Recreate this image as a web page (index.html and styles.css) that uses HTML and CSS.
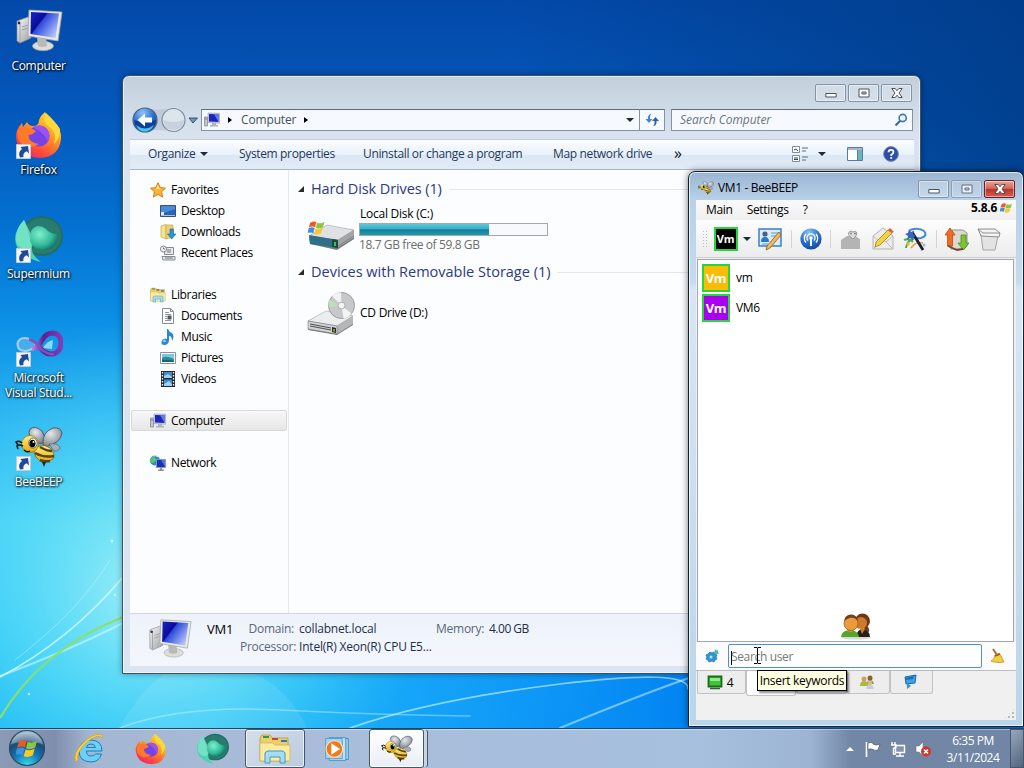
FILE: index.html
```html
<!DOCTYPE html>
<html lang="en">
<head>
    <meta charset="UTF-8">
    <meta name="viewport" content="width=device-width, initial-scale=1.0">
    <title>Desktop</title>
    <link rel="stylesheet" href="styles.css">
</head>
<body>
    <!-- Shared icons -->
    <svg class="sprite" width="0" height="0" aria-hidden="true">
        <defs>
            <linearGradient id="screen" x1="0" y1="0" x2="1" y2=".7">
                <stop offset="0" stop-color="#1226c8"/><stop offset=".4" stop-color="#0a0c98"/>
                <stop offset=".44" stop-color="#2c48dc"/><stop offset="1" stop-color="#b4c4fa"/>
            </linearGradient>
            <linearGradient id="metal" x1="0" y1="0" x2="1" y2="1">
                <stop offset="0" stop-color="#fafafa"/><stop offset="1" stop-color="#9a9da0"/>
            </linearGradient>
            <linearGradient id="fox" x1=".8" y1="0" x2=".2" y2="1">
                <stop offset="0" stop-color="#ffe438"/><stop offset=".4" stop-color="#ff9a22"/>
                <stop offset=".75" stop-color="#ff4a3c"/><stop offset="1" stop-color="#e3207a"/>
            </linearGradient>
            <radialGradient id="teal" cx=".35" cy=".35" r=".8">
                <stop offset="0" stop-color="#7df0cf"/><stop offset=".6" stop-color="#2fb796"/><stop offset="1" stop-color="#0c5a4e"/>
            </radialGradient>
            <linearGradient id="gold" x1="0" y1="0" x2="0" y2="1">
                <stop offset="0" stop-color="#fff08a"/><stop offset="1" stop-color="#e3a800"/>
            </linearGradient>
            <radialGradient id="wing" cx=".4" cy=".3" r=".8">
                <stop offset="0" stop-color="#e6e9ee"/><stop offset="1" stop-color="#6f7580"/>
            </radialGradient>
            <radialGradient id="blueball" cx=".4" cy=".2" r=".9">
                <stop offset="0" stop-color="#8fc4f6"/><stop offset=".5" stop-color="#2b74cf"/><stop offset="1" stop-color="#0d3f94"/>
            </radialGradient>
            <radialGradient id="orb" cx=".5" cy="1" r="1">
                <stop offset="0" stop-color="#35e0f2"/><stop offset=".4" stop-color="#1479b2"/>
                <stop offset=".7" stop-color="#1b4a76"/><stop offset="1" stop-color="#a9c2d4"/>
            </radialGradient>
            <linearGradient id="infinity" x1="0" y1="0" x2="1" y2="0">
                <stop offset="0" stop-color="#b48be0"/><stop offset=".4" stop-color="#5c1f92"/><stop offset="1" stop-color="#7d3fb8"/>
            </linearGradient>

            <symbol id="i-winflag" viewBox="0 0 24 22">
                <path d="M3 4q4-3 8-1L9.500 10Q6 8 1 10z" fill="#ec5a24"/>
                <path d="M12 4q5 2 10-1l-2 7q-5 3-9.500 1z" fill="#8cc63a"/>
                <path d="M1 11q4-2 8 0l-2 7q-4-2-8 0z" fill="#3d8fe0"/>
                <path d="M10 12q5 2 9.500-1l-2 7q-5 3-9.500 1z" fill="#fdc729"/>
            </symbol>
            <symbol id="i-computer" viewBox="0 0 48 48">
                <path d="M2 14l11-4 3 4v17L5 36l-3-2z" fill="url(#metal)" stroke="#8d9093" stroke-width=".7"/>
                <path d="M5 16v19M7 20l6-2M7 23l6-2" stroke="#9da0a3" fill="none"/>
                <circle cx="4" cy="16" r="1.400" fill="#333"/>
                <ellipse cx="28" cy="39" rx="10.500" ry="4.700" fill="#dcdcd8" stroke="#a9aaa8" stroke-width=".7"/>
                <path d="M22 30h9l1 9q-5 2-9 0z" fill="#b8bab8"/>
                <path d="M14 3l33 2-4 29-30-5z" fill="#e9e9e6" stroke="#a4a7a8" stroke-width=".8"/>
                <path d="M16 5l28 1.500-3.500 24.500-25-4z" fill="url(#screen)"/>
            </symbol>
            <symbol id="i-computer-sm" viewBox="0 0 16 16">
                <path d="M.5 5h3v9h-3z" fill="#c3c6cc" stroke="#7b808a" stroke-width=".7"/>
                <path d="M1.200 7h1.600" stroke="#555" stroke-width=".8"/>
                <path d="M4 1l11.500.3v10L4 10.500z" fill="#cfd3e2" stroke="#9297ab" stroke-width=".6"/>
                <path d="M5 2l9.500.3v7.600L5 9.500z" fill="#1c24bd"/><path d="M10 2l4.500.3v7.600z" fill="#5b7bee"/>
                <path d="M8 11h4v2h2v1.500H6V13h2z" fill="#aeb3bd"/>
            </symbol>
            <symbol id="i-firefox" viewBox="0 0 48 48">
                <path d="M30 1q3 6 9 10 8 8 7 17-2 18-21 19Q3 46 1 26q0-8 6-14l1 4 4-5q2 4 6 4 6 0 6-6 2-5 6-8z" fill="url(#fox)"/>
                <path d="M31 2q-5 9 5 15 6 6 3 16 7-7 6-15-5-8-14-16z" fill="#ffd93a"/>
                <circle cx="24" cy="25" r="10.500" fill="#7542e5"/>
                <path d="M24 14.500a10.500 10.500 0 0 1 9 16q-5-10-15-14 3-2 6-2z" fill="#9b52f0"/>
                <path d="M3 20q8-7 18 0-3 4-8 4 1 8 11 9-9 6-16 1Q1 29 3 20z" fill="#ff7a28"/>
            </symbol>
            <symbol id="i-supermium" viewBox="0 0 48 48">
                <ellipse cx="27" cy="21" rx="21" ry="20" fill="#216e62"/>
                <ellipse cx="27" cy="21" rx="19" ry="18" fill="#277c6f"/>
                <path d="M9 5Q-5 20 3 34q9 10 23 13-10-7-9-14-3-16-8-28z" fill="#4fd2b0"/>
                <path d="M9 5q7 14 11 22l-6 8q-14-2-13-13Q2 12 9 5z" fill="#82e8cd" opacity=".7"/>
                <path d="M16 16q6-9 15-2 4 5 11 5 2 14-12 16-12 0-15-9z" fill="url(#teal)"/>
            </symbol>
            <symbol id="i-vs" viewBox="0 0 48 48">
                <path d="M2.500 25q1-6 7.500-6 6 0 11 7-5 6-11 6-7 0-7.500-7z" fill="#bfe2f8" fill-opacity=".3" stroke="#a6cdf0" stroke-width="2.200"/>
                <path d="M17 30q7-2 10-9 4-7 11-7 8 1 8 10t-8 11q-7 1-14-7" fill="none" stroke="url(#infinity)" stroke-width="5"/>
                <path d="M14 20q7 3 12 10 7 6 13 5" fill="none" stroke="#8350c0" stroke-width="2.500"/>
                <path d="M28 29q4-7 10-8l-1 9z" fill="#8ed8f4"/>
            </symbol>
            <symbol id="i-bee" viewBox="0 0 48 48">
                <path d="M23 20Q11 13 15 6q5-4 12 2 4 6 3 13z" fill="url(#wing)" stroke="#555b66"/>
                <path d="M28 21Q27 9 38 5q8-1 9 5-1 10-17 14z" fill="url(#wing)" stroke="#555b66"/>
                <path d="M34 21q9-1 11 3 0 4-6 4z" fill="#a9aeb8" stroke="#5d626d" stroke-width=".7"/>
                <path d="M19 27q7-8 16-2 6 6 3 11-5 4-11 3-8-4-8-12z" fill="url(#gold)" stroke="#8c6500" stroke-width=".8"/>
                <path d="M25 24q7 4 12 4M20 30q9 5 19 3M25 37q5 2 10 1" fill="none" stroke="#5a420e" stroke-width="2.500"/>
                <path d="M27 39l2 5 2-5z" fill="#222"/>
                <ellipse cx="15" cy="21" rx="8.500" ry="8.500" fill="url(#gold)" stroke="#9a7400" stroke-width=".7"/>
                <ellipse cx="18" cy="20" rx="4.200" ry="5" fill="#fff" stroke="#333" stroke-width=".7"/>
                <ellipse cx="17.500" cy="20.500" rx="3" ry="3.800" fill="#000"/><circle cx="18.500" cy="19" r="1" fill="#fff"/>
                <path d="M7 20q-3-3-6-1l2 3M8 23q-4-2-6 0l1 3M9 27q3 3 6 1" fill="none" stroke="#111" stroke-width="1.500"/>
            </symbol>
            <symbol id="i-link" viewBox="0 0 15 15">
                <path d="M.5.5h14v14H.5z" fill="#f4f6f8" stroke="#c3cad0"/>
                <path d="M4 13.500Q1.500 8 6 5L4.500 3l7.500-1 1 7.500-2.300-2.300Q6.500 9 7.500 13z" fill="#1d4b9a"/>
            </symbol>
            <symbol id="i-ie" viewBox="0 0 32 32">
                <path d="M29 18H13.500q0 5 4.500 5 3.500 0 4.500-2h6Q26 29 18 29 6 28.500 6 18 7 7.500 18 7q11 .5 11 11zM13.500 14.500h9Q22 11 18 11t-4.500 3.500z" fill="#6fd0f5" stroke="#1b7ec0"/>
                <path d="M3 29Q-1 20 11 9 22-1 29 2q1 1 0 3-1-2-4-2-6 1-13 8Q3 20 5 27z" fill="#ffd43a" stroke="#d79b0a" stroke-width=".6"/>
            </symbol>
            <symbol id="i-libraries" viewBox="0 0 32 32">
                <path d="M1 5l2-3h8l2 3h16v23H1z" fill="#eccf6c" stroke="#b5973a" stroke-width=".8"/>
                <path d="M4 4h6M13 6h6M22 8h6" stroke="#2c9a3d" stroke-width="2"/><path d="M13 6h5" stroke="#d5452b" stroke-width="2"/><path d="M22 8h5" stroke="#2e73c8" stroke-width="2"/>
                <path d="M1 10h13l2 2h15v16H1z" fill="#fbeb9e" stroke="#d2b558" stroke-width=".8"/>
                <path d="M6 30V20q1-2 3-2h14q2 0 3 2v10h-5v-6H11v6z" fill="#a6dcf4" stroke="#3f99cc"/>
            </symbol>
            <symbol id="i-wmp" viewBox="0 0 32 32">
                <path d="M11 4h18v24H11z" fill="#9ad0ee" stroke="#3e8fc0"/>
                <path d="M7 3h19v26H7z" fill="#bfe2f5" stroke="#3e8fc0"/>
                <path d="M3 4h19v23H3z" fill="#a5d4f0" stroke="#4a9acb"/>
                <circle cx="13" cy="16" r="9.500" fill="#f07a1c" stroke="#fde1c0" stroke-width="1.200"/>
                <path d="M9.500 9.500l10 6.500-10 6.500z" fill="#fff"/>
            </symbol>
            <symbol id="i-min" viewBox="0 0 12 12"><path d="M.8 6.500h10.400v3.500H.8z" fill="#fff" stroke="#4b5561"/></symbol>
            <symbol id="i-max" viewBox="0 0 12 12"><path d="M1 2h10v8H1z" fill="#fff" stroke="#4b5561"/><path d="M4 5h4v2H4z" fill="#cfd8e2" stroke="#4b5561"/></symbol>
            <symbol id="i-close" viewBox="0 0 12 12"><path d="M.8 1.500h3.400L6 3.700l1.800-2.200h3.400L8 6l3.200 4.500H7.800L6 8.300l-1.800 2.200H.8L4 6z" fill="#fff" stroke="#4f505a"/></symbol>
        </defs>
    </svg>

    <div class="desktop">
        <svg class="wallpaper" viewBox="0 0 1024 768" aria-hidden="true">
            <defs>
                <linearGradient id="sky" x1="0" y1="0" x2="0" y2="1">
                    <stop offset="0" stop-color="#0349a9"/><stop offset=".15" stop-color="#0458bb"/>
                    <stop offset=".3" stop-color="#0472d2"/><stop offset=".42" stop-color="#0c90e6"/>
                    <stop offset=".55" stop-color="#27b4f0"/><stop offset=".68" stop-color="#3cccf4"/>
                    <stop offset=".85" stop-color="#25c3f5"/><stop offset="1" stop-color="#12b4f4"/>
                </linearGradient>
                <radialGradient id="glow" gradientUnits="userSpaceOnUse" cx="150" cy="590" r="270">
                    <stop offset="0" stop-color="#b6f7f8" stop-opacity=".85"/><stop offset=".5" stop-color="#6fe6fa" stop-opacity=".5"/>
                    <stop offset="1" stop-color="#4fd0fa" stop-opacity="0"/>
                </radialGradient>
                <linearGradient id="right" x1="0" y1="0" x2="1" y2="0">
                    <stop offset=".22" stop-color="#18a0fb" stop-opacity="0"/><stop offset=".42" stop-color="#129cfa" stop-opacity=".8"/><stop offset=".67" stop-color="#0284f2"/>
                </linearGradient>
                <linearGradient id="topright" x1="0" y1="0" x2="1" y2="0">
                    <stop offset=".5" stop-color="#003a85" stop-opacity="0"/><stop offset="1" stop-color="#003a85" stop-opacity=".8"/>
                </linearGradient>
            </defs>
            <rect width="1024" height="768" fill="url(#sky)"/>
            <rect width="1024" height="400" fill="url(#topright)"/>
            <rect y="500" width="1024" height="268" fill="url(#right)"/>
            <rect width="1024" height="768" fill="url(#glow)"/>
            <path d="M118 730Q140 690 165 674H255Q290 690 308 730z" fill="#fff" opacity=".09"/>
            <g fill="none" stroke="#d9fbff" stroke-linecap="round">
                <path d="M0 677Q70 640 123 577" stroke-width="1.600" opacity=".8"/>
                <path d="M0 676Q70 650 123 623" stroke-width="2" opacity=".55"/>
                <path d="M15 660Q80 610 110 560" opacity=".4"/>
                <path d="M120 728Q180 705 280 710T470 716" stroke-width="1.500" opacity=".4"/>
                <path d="M350 728Q430 700 560 684T688 689" stroke-width="1.600" opacity=".6"/>
                <path d="M560 728Q640 695 689 678" stroke-width="2" opacity=".5"/>
            </g>
            <path d="M0 718Q40 650 123 617" fill="none" stroke="#8be06a" stroke-width="2"/>
            <g fill="#e9ffff" opacity=".7">
                <circle cx="112" cy="541" r="1.500"/><circle cx="115" cy="595" r="1.200"/><circle cx="29" cy="694" r="1.200"/>
            </g>
        </svg>

        <div class="shortcuts">
            <div class="shortcut">
                <svg class="shortcut-icon"><use href="#i-computer"/></svg>
                <span>Computer</span>
            </div>
            <div class="shortcut">
                <svg class="shortcut-icon"><use href="#i-firefox"/></svg>
                <svg class="link"><use href="#i-link"/></svg>
                <span>Firefox</span>
            </div>
            <div class="shortcut">
                <svg class="shortcut-icon"><use href="#i-supermium"/></svg>
                <svg class="link"><use href="#i-link"/></svg>
                <span>Supermium</span>
            </div>
            <div class="shortcut">
                <svg class="shortcut-icon"><use href="#i-vs"/></svg>
                <svg class="link"><use href="#i-link"/></svg>
                <span>Microsoft<br>Visual Stud...</span>
            </div>
            <div class="shortcut">
                <svg class="shortcut-icon"><use href="#i-bee"/></svg>
                <svg class="link"><use href="#i-link"/></svg>
                <span>BeeBEEP</span>
            </div>
        </div>

        <!-- Explorer -->
        <div class="window explorer">
            <div class="caption">
                <div class="caption-btn"><svg><use href="#i-min"/></svg></div>
                <div class="caption-btn"><svg><use href="#i-max"/></svg></div>
                <div class="caption-btn"><svg><use href="#i-close"/></svg></div>
            </div>
            <div class="navbar">
                <svg class="navbuttons" viewBox="0 0 68 28">
                    <path d="M13 2Q27 5 41 2v24q-14-4-28 0z" fill="#b8c5d1" opacity=".7"/>
                    <circle cx="13" cy="14" r="12" fill="url(#blueball)" stroke="#4b6583" stroke-width="1.200"/>
                    <path d="M2 14q11 4 22 0-1 11-11 11T2 14z" fill="#0f4099"/>
                    <path d="M4 19q9 7 18 0-3 6-9 6.500T4 19z" fill="#42c8f5"/>
                    <path d="M5.500 14l7.500-6.500v4h7v5h-7v4z" fill="#fff"/>
                    <circle cx="41.500" cy="14" r="11.500" fill="#dce4ec" stroke="#7f8e9d" stroke-width="1.200"/>
                    <path d="M31 14q10 4 21 0-1 10-10.500 10T31 14z" fill="#c8d2dc"/>
                    <path d="M57 12h8.500L61 17z" fill="#7794b4" stroke="#32475f" stroke-width=".9"/>
                </svg>
                <div class="address">
                    <svg class="icon16"><use href="#i-computer-sm"/></svg>
                    <i class="tri-right"></i>
                    <span>Computer</span>
                    <i class="tri-right"></i>
                    <i class="tri-down"></i>
                </div>
                <div class="refresh">
                    <svg class="icon16" viewBox="0 0 16 16"><path d="M7.500 2Q4 2 4 6v1H1.500L5 11l3.500-4H6V5q0-2 1.500-3z" fill="#3f86d6"/><path d="M9 14q3.500 0 3.500-4V9H15l-3.500-4L8 9h2.500v2q0 2-1.500 3z" fill="#2d62a8"/></svg>
                </div>
                <div class="searchbox">
                    <span>Search Computer</span>
                    <svg class="icon14" viewBox="0 0 14 14"><path d="M6.500 7.500L1.500 12.500" stroke="#3e6a9e" stroke-width="2.200"/><circle cx="8.700" cy="5" r="3.600" fill="#eaf4fc" stroke="#4275ad" stroke-width="1.600"/></svg>
                </div>
            </div>
            <div class="client">
                <div class="commands">
                    <span class="organize">Organize <i class="tri-down"></i></span>
                    <span>System properties</span>
                    <span>Uninstall or change a program</span>
                    <span>Map network drive</span>
                    <span class="more">»</span>
                    <svg class="icon16" viewBox="0 0 16 16"><path d="M.5.5h7v6h-7zM.5 9.500h7v6h-7z" fill="#fff" stroke="#7c8ba0"/><path d="M2 4l2-1 2 2M2 12h4M2 13.500h4" stroke="#345" fill="none"/><path d="M10 2h6M10 5h4M10 11h6M10 14h4" stroke="#5c6b80"/></svg>
                    <i class="tri-down"></i>
                    <svg class="icon16" viewBox="0 0 16 16"><path d="M.5 1.500h15v13H.5z" fill="#fff" stroke="#5f7894"/><path d="M1 2h14v2H1z" fill="#9fb9d0"/><path d="M11 4h4v10h-4z" fill="#67b3c6"/><path d="M10.500 4v10" stroke="#5f7894"/></svg>
                    <svg class="icon16" viewBox="0 0 16 16"><circle cx="8" cy="8" r="7.400" fill="#2c4ea6" stroke="#7b8dae"/><path d="M5.500 6.300Q5.500 3.800 8 3.800t2.500 2.300Q10.500 7.500 8.300 8.700V10" fill="none" stroke="#fff" stroke-width="1.800"/><circle cx="8.200" cy="12" r="1.100" fill="#fff"/></svg>
                </div>
                <div class="body">
                    <div class="tree">
                        <div class="node"><svg class="icon16" viewBox="0 0 16 16"><path d="M8 .7l2.200 4.900 5.300.6-4 3.500 1.200 5.400L8 12.400l-4.700 2.700 1.200-5.400-4-3.500 5.300-.6z" fill="#fdb43a" stroke="#d67c12"/><path d="M8 3l1.500 4H6z" fill="#ffe9a8"/></svg>Favorites</div>
                        <div class="node sub"><svg class="icon16" viewBox="0 0 16 16"><path d="M.5 2.500h15v11H.5z" fill="#2a62bd" stroke="#35507a"/><path d="M1 3h14v3L1 11z" fill="#4a8ad8"/><path d="M1 12h14v1H1z" fill="#a9c0dc"/><path d="M1 9h3v3H1z" fill="#dde8f4"/></svg>Desktop</div>
                        <div class="node sub"><svg class="icon16" viewBox="0 0 16 16"><path d="M1 2l5-1.500V15L1 13z" fill="#f7e48e" stroke="#c5a84a" stroke-width=".7"/><path d="M6 1h7v12l-7 2z" fill="#ecd173" stroke="#c5a84a" stroke-width=".7"/><path d="M10 5h3.500v5H16l-4.300 5L7.500 10H10z" fill="#2d92dc" stroke="#1a68ab" stroke-width=".6"/></svg>Downloads</div>
                        <div class="node sub"><svg class="icon16" viewBox="0 0 16 16"><path d="M4.500 2.500h9v7h-9zM2 11.500h13v3.500H3z" fill="#e8eaec" stroke="#858b92"/><circle cx="3.500" cy="4" r="3" fill="#f5f6f7" stroke="#7d848c"/><path d="M3.500 2.500V4H5M7 5h4M7 7h4M5 13h8" fill="none" stroke="#6e757d"/></svg>Recent Places</div>
                        <div class="node gap"><svg class="icon16"><use href="#i-libraries"/></svg>Libraries</div>
                        <div class="node sub"><svg class="icon16" viewBox="0 0 16 16"><path d="M2.500.5h8l3 3v12h-11z" fill="#fff" stroke="#838a92"/><path d="M10.500.5v3h3" fill="none" stroke="#838a92"/><path d="M5 4.500h4M5 6.500h6M5 8.500h2M5 10.500h2M5 12.500h6" stroke="#8e959c"/><path d="M7.500 7.500h4v4h-4z" fill="#4d5964"/></svg>Documents</div>
                        <div class="node sub"><svg class="icon16" viewBox="0 0 16 16"><path d="M8 0q1 3 4 4 3 3 0 8 0-5-3-5v5q-1 4-4.500 4T1.500 13 5 9.500q1 0 2 .5V0z" fill="#2e87d0"/><circle cx="4.500" cy="12" r="1.300" fill="#a0d4f5"/></svg>Music</div>
                        <div class="node sub"><svg class="icon16" viewBox="0 0 16 16"><path d="M.5 2.500h15v11H.5z" fill="#fff" stroke="#8391a0"/><path d="M2 4h12v8H2z" fill="#7cc4e8"/><path d="M2 8q4-3 12 1v3H2z" fill="#2f8f83"/><path d="M2 10q6-1 12 1v1H2z" fill="#1c5f86"/></svg>Pictures</div>
                        <div class="node sub"><svg class="icon16" viewBox="0 0 16 16"><path d="M1 0h14v16H1z" fill="#23282e"/><path d="M4 1h8v6H4zM4 8.500h8V15H4z" fill="#3f8ed0"/><path d="M4 5l4-2 4 3v1H4zM4 13l5-3 3 3v2H4z" fill="#9bd0f0"/><path d="M2.500 1v15M13.500 1v15" stroke="#fff" stroke-width="1.300" stroke-dasharray="1.500 1.500"/></svg>Videos</div>
                        <div class="node gap selected"><svg class="icon16"><use href="#i-computer-sm"/></svg>Computer</div>
                        <div class="node gap"><svg class="icon16" viewBox="0 0 16 16"><circle cx="5" cy="5.500" r="5" fill="#2a8cc4"/><path d="M2 2q3 0 4 2T3 8Q0 8 0 5z" fill="#5ec46a"/><path d="M3 1q3-1 5 1" stroke="#d4f0fb" fill="none"/><path d="M6.500 4.500h9v8h-9z" fill="#1931b8" stroke="#8c95b4"/><path d="M11 5h4v7z" fill="#4f74e4"/><path d="M10 13h2v1.500h2V16H8v-1.500h2z" fill="#8790a4"/></svg>Network</div>
                    </div>
                    <div class="files">
                        <div class="group"><i class="expander"></i><span class="g1">Hard Disk Drives (1)</span></div>
                        <div class="drive disk">
                            <svg class="driveicon" viewBox="0 0 48 32">
                                <path d="M2 17L20 7l27 4v9L30 31 3 25z" fill="#75797c"/>
                                <path d="M2 17L20 6l27 5-16 10z" fill="#dfe1e2" stroke="#a1a4a7" stroke-width=".6"/>
                                <path d="M31 21l16-10v8L31 29z" fill="#a3a6a8"/><path d="M31 27l16-10M31 29l16-10" stroke="#6c7073" stroke-width=".7"/>
                                <path d="M2 16l29 5v8L3 25z" fill="#2f6f88"/><path d="M25 20l6 1v8l-6-1z" fill="#1c4a34"/><path d="M28 23v4" stroke="#4ee065" stroke-width="1.500"/>
                                <svg x="1" y="0" width="18" height="18"><use href="#i-winflag"/></svg>
                            </svg>
                            <div class="driveinfo">
                                <div>Local Disk (C:)</div>
                                <div class="meter"><div class="meter-fill" style="width: 69%"></div></div>
                                <div class="free">18.7 GB free of 59.8 GB</div>
                            </div>
                        </div>
                        <div class="group"><i class="expander"></i><span class="g2">Devices with Removable Storage (1)</span></div>
                        <div class="drive">
                            <svg class="driveicon cd" viewBox="0 0 48 44">
                                <path d="M1 29l18-9 27 4v9L30 43 1 38z" fill="#77797b"/>
                                <path d="M1 29l18-10 27 5-16 10z" fill="#ecedee" stroke="#a4a6a8" stroke-width=".6"/>
                                <path d="M30 34l16-10v8L30 42z" fill="#b4b6b8"/><path d="M1 29l29 5v8L1 37z" fill="#d2d3d5" stroke="#77797c" stroke-width=".6"/>
                                <path d="M3 32l21 4M3 34l21 4" stroke="#4c4e51"/><path d="M25 35l4 1v5l-4-1z" fill="#2a2d2e"/><path d="M27 37v2.500" stroke="#a0e23c" stroke-width="1.300"/>
                                <circle cx="34.500" cy="13.500" r="13" fill="#c6c8ca" stroke="#9a9c9e"/>
                                <path d="M34.500 13.500L25 4q4-4 9-3.500zM34.500 13.500l10 8q-4 5-8 5z" fill="#f3f3f3"/>
                                <path d="M34.500 13.500L22 8q-1 4 0 7z" fill="#b9e3b2"/>
                                <circle cx="34.500" cy="13.500" r="3.500" fill="#f5f5f5" stroke="#a9abad"/>
                            </svg>
                            <div class="driveinfo">CD Drive (D:)</div>
                        </div>
                    </div>
                </div>
                <div class="details">
                    <svg class="detailicon"><use href="#i-computer"/></svg>
                    <div class="machine">VM1</div>
                    <dl class="facts">
                        <dt>Domain:</dt><dd>collabnet.local</dd><dt class="mem">Memory:</dt><dd class="ram">4.00 GB</dd>
                        <dt>Processor:</dt><dd class="cpu">Intel(R) Xeon(R) CPU E5...</dd>
                    </dl>
                </div>
            </div>
        </div>

        <!-- BeeBEEP -->
        <div class="window beebeep">
            <div class="titlebar">
                <svg class="icon16"><use href="#i-bee"/></svg>
                <span class="title">VM1 - BeeBEEP</span>
                <div class="caption-btn"><svg><use href="#i-min"/></svg></div>
                <div class="caption-btn dim"><svg><use href="#i-max"/></svg></div>
                <div class="caption-btn red"><svg><use href="#i-close"/></svg></div>
            </div>
            <div class="beeclient">
                <div class="menubar">
                    <span>Main</span><span>Settings</span><span>?</span>
                    <b>5.8.6</b>
                    <svg class="menuflag"><use href="#i-winflag"/></svg>
                </div>
                <div class="toolbar">
                    <i class="grip"></i>
                    <span class="avatar small">Vm</span>
                    <i class="tri-down"></i>
                    <svg class="icon24" viewBox="0 0 24 24"><path d="M1 2h22v17H1z" fill="#d9ecfb" stroke="#3c80c0" stroke-width="1.500"/><circle cx="7" cy="7" r="2.600" fill="#46627e"/><path d="M3 15q0-5 4-5t4 5z" fill="#2879c5"/><path d="M13 6h8M13 9h6M4 17h6" stroke="#5d9ad3"/><path d="M21 5l2 3-11 13-4 2 1-4z" fill="#f2b758" stroke="#8a5c1e" stroke-width=".8"/></svg>
                    <i class="sep"></i>
                    <svg class="icon22" viewBox="0 0 22 22"><circle cx="11" cy="11" r="10.600" fill="url(#blueball)"/><g fill="none" stroke="#fff" stroke-width="1.400"><path d="M8 12.500a4 4 0 1 1 6 0M6 14.500a6.500 6.500 0 0 1 0-8.500M16 14.500a6.500 6.500 0 0 0 0-8.500"/><path d="M11 10v8" stroke-width="2"/></g><circle cx="11" cy="10" r="1.800" fill="#fff"/></svg>
                    <i class="sep"></i>
                    <svg class="icon22" viewBox="0 0 22 22"><path d="M1 12l6-4h8l5 3v10H1z" fill="#b4b4b4"/><path d="M13 11q-6-4-4-7 2-2 4 0 3-2 4 1 0 3-4 6z" fill="#dcdcdc" stroke="#9a9a9a"/><circle cx="11" cy="5.500" r="1" fill="#888"/><circle cx="15" cy="5.500" r="1" fill="#888"/></svg>
                    <svg class="icon24" viewBox="0 0 24 24"><path d="M2 9l10-8 10 8v13H2z" fill="#ececec" stroke="#b5b5b5"/><path d="M2 22l8-8h4l8 8M2 9l7 6M22 9l-7 6" fill="none" stroke="#bcbcbc"/><path d="M17 3l4 3L9 18l-5 2 1-5z" fill="#f6d33c" stroke="#a07e18" stroke-width=".8"/><path d="M17 3l2-2 4 4-2 1z" fill="#e35353"/></svg>
                    <svg class="icon24" viewBox="0 0 24 24"><path d="M7 3q9-3 14 1 4 5-3 7-4 1-8-1" fill="none" stroke="#3d8ed8" stroke-width="2"/><path d="M3 21q1-8 8-9M1 13q5-2 9 2" fill="none" stroke="#4eaa4a" stroke-width="2"/><path d="M8 21q5-7 12-5" fill="none" stroke="#e0a52a" stroke-width="1.500"/><path d="M9 5l11 18" stroke="#1c1c34" stroke-width="2.800"/><path d="M6 2l2 3 3-1-1 3 3 2-3 1v3l-3-2-3 2 1-4-3-2 3-1z" fill="#3564c2"/><circle cx="5" cy="17" r="1.800" fill="#e1b83a"/><circle cx="21" cy="18" r="1.500" fill="#79c3ef"/></svg>
                    <i class="sep"></i>
                    <svg class="icon24" viewBox="0 0 24 24"><path d="M7 3h11l4 3v13l-3 3H6z" fill="#ddd9d2" stroke="#958f88"/><path d="M5 1l5 7H7.500v11h-5V8H0z" fill="#f06a22" stroke="#b93f0c" stroke-width=".7"/><path d="M16 8h5v8h3l-5.500 7-5.500-7h3z" fill="#7cc634" stroke="#3d8214" stroke-width=".7"/><path d="M3 19l9 4 6-1" fill="none" stroke="#714a2a" stroke-width="1.800"/></svg>
                    <svg class="icon24" viewBox="0 0 24 24"><path d="M4 8l2 15h12l3-14z" fill="#e3e3e3" stroke="#a6a6a6"/><path d="M1 2h17l5 4-1 4-18-1z" fill="#f3f3f3" stroke="#8e8e8e"/><path d="M1 2l5 4h17" fill="none" stroke="#8e8e8e"/></svg>
                </div>
                <div class="userlist">
                    <div class="user"><span class="avatar yellow">Vm</span>vm</div>
                    <div class="user"><span class="avatar purple">Vm</span>VM6</div>
                    <svg class="people" viewBox="0 0 32 28">
                        <ellipse cx="16" cy="25.500" rx="15" ry="2" fill="#000" opacity=".15"/>
                        <path d="M16 25q1-8 7-8t7 8z" fill="#26201c"/><circle cx="22.500" cy="9" r="7.500" fill="#6f3714"/><path d="M25 13q5 2 4 7l-5-2z" fill="#6f3714"/><circle cx="21" cy="11" r="6" fill="#cf7a2a"/><path d="M20 17h5l-3 5z" fill="#cf7a2a"/>
                        <path d="M1 25q1-7 9-7t9 7z" fill="#56a62c"/><path d="M7 18q4 4 7 0l-1-4H8z" fill="#e39a45"/>
                        <circle cx="11" cy="11.500" r="7" fill="#ec9b3c" stroke="#8a5318" stroke-width=".7"/><path d="M4 9Q5 2 12 2.500q5 1 6 6-3-3-7-3-4 1-7 3.500z" fill="#74401a"/>
                    </svg>
                </div>
                <div class="searchrow">
                    <svg class="icon16" viewBox="0 0 16 16"><path d="M6 4l2 1 2-1 1 2 2 1-1 2 1 2-2 1-1 2-2-1-3 1-1-2-2-1 1-2-1-2 2-1z" fill="#2f95d8" stroke="#1b6da8" stroke-width=".7"/><circle cx="7" cy="9" r="1.500" fill="#bfe4f8"/><path d="M11 1l1 1.500L14 2v2l1 1.500-2 .5-1 1-1-2-2-.500 1.500-1z" fill="#58b6a8"/></svg>
                    <div class="userinput">Search user</div>
                    <svg class="icon16" viewBox="0 0 16 16"><path d="M3 1l4 6" stroke="#a06a1c" stroke-width="1.800"/><path d="M5 7l4-2 2 3 3 6q-5 1-9 0-3 0-4-1 4-2 4-6z" fill="#f1cf3e" stroke="#b28a14" stroke-width=".7"/><path d="M5 8l5-2" stroke="#c4402a" stroke-width="1.400"/></svg>
                </div>
                <div class="tabs">
                    <div class="tab"><svg class="icon16" viewBox="0 0 16 16"><path d="M1.500 1.500h13v10h-13z" fill="#3fc53a" stroke="#186d18" stroke-width="1.800"/><path d="M3 3h10v3H3z" fill="#96ea84"/><path d="M3 13.500h10" stroke="#3b5c3b" stroke-width="1.500"/></svg>4</div>
                    <div class="tab active"></div>
                    <div class="tab"></div>
                    <div class="tab"><svg class="icon16" viewBox="0 0 16 16"><circle cx="5" cy="5" r="2.500" fill="#caa264"/><path d="M1 12q0-5 4-5t4 5z" fill="#b0b83a"/><circle cx="11" cy="4" r="2.500" fill="#8a6033"/><path d="M8 10q0-4 3-4t4 4z" fill="#8a9a40"/><circle cx="11" cy="9" r="2.300" fill="#d8b98c"/><path d="M7.500 15q0-4 3.500-4t4 4z" fill="#c6cbe0"/></svg></div>
                    <div class="tab"><svg class="icon16" viewBox="0 0 16 16"><path d="M3 3l11-2-1 8-9 1z" fill="#3ca4e4" stroke="#1768a8"/><path d="M4 4l8-2-1 3-7 1z" fill="#1e6cb6"/><path d="M5 9l4 3-4 3z" fill="#3c8fd0"/></svg></div>
                </div>
                <div class="statusbar"><i class="sizegrip"></i></div>
            </div>
            <div class="tooltip">Insert keywords</div>
            <svg class="cursor" viewBox="0 0 9 17"><path d="M1 .5h3l.5.5.5-.5h3M4.500 1v15M1 16.500h3l.5-.5.5.5h3" fill="none" stroke="#000"/></svg>
        </div>

        <div class="taskbar">
            <div class="start">
                <svg class="orb" viewBox="0 0 40 40">
                    <circle cx="20" cy="20" r="17.500" fill="url(#orb)" stroke="#2b4864" stroke-width="1.200"/>
                    <path d="M4 16Q8 4 20 4t16 12q-16-5-32 0z" fill="#fff" opacity=".3"/>
                    <svg x="9" y="9" width="23" height="23"><use href="#i-winflag"/></svg>
                </svg>
            </div>
            <div class="task"><svg class="icon32"><use href="#i-ie"/></svg></div>
            <div class="task"><svg class="icon32"><use href="#i-firefox"/></svg></div>
            <div class="task"><svg class="icon32"><use href="#i-supermium"/></svg></div>
            <div class="task"><div class="taskbtn"><svg class="icon32"><use href="#i-libraries"/></svg></div></div>
            <div class="task"><svg class="wmp"><use href="#i-wmp"/></svg></div>
            <div class="task"><div class="taskbtn current"><svg class="icon32"><use href="#i-bee"/></svg></div></div>
            <div class="tray">
                <i class="tri-up"></i>
                <svg class="icon16" viewBox="0 0 16 16"><path d="M1.500 1v15" stroke="#fff" stroke-width="1.600"/><path d="M3 2q3-1 5 0v1q3 2 7 0l-2 6q-3 1-5-.500Q5 7 3 9z" fill="#fff" stroke="#46566a" stroke-width=".7"/></svg>
                <svg class="icon16" viewBox="0 0 16 16"><path d="M5.500 4.500h9v7h-9z" fill="#8494ac" stroke="#fff" stroke-width="1.400"/><path d="M10 12v2.500M6 15h8M2 1v3M5 1v3M1 4h5v2L3.500 7.500V13H6" fill="none" stroke="#fff" stroke-width="1.400"/></svg>
                <svg class="icon16" viewBox="0 0 16 16"><path d="M1 5h3l4-4v14l-4-4H1z" fill="#fff" stroke="#6c7788" stroke-width=".6"/><circle cx="11" cy="10.500" r="5" fill="#d2342c"/><path d="M9 8.500l4 4m0-4l-4 4" stroke="#fff" stroke-width="1.600"/></svg>
            </div>
            <div class="clock">6:35 PM<br>3/11/2024</div>
            <div class="peek"></div>
        </div>
    </div>
</body>
</html>
```
FILE: styles.css
```css
body, html {
    margin: 0;
    padding: 0;
    height: 100%;
    overflow: hidden;
    font-family: "Open Sans", "Noto Sans", sans-serif;
    font-size: 12px;
    line-height: 16px;
    letter-spacing: -0.35px;
    color: #000;
}

* {
    box-sizing: border-box;
}

svg {
    display: block;
    flex: none;
}

.sprite {
    position: absolute;
}

.desktop {
    position: relative;
    width: 1024px;
    height: 768px;
    overflow: hidden;
}

.wallpaper {
    position: absolute;
    left: 0;
    top: 0;
    width: 1024px;
    height: 768px;
}

.icon14 { width: 14px; height: 14px; }
.icon16 { width: 16px; height: 16px; }
.icon22 { width: 22px; height: 22px; }
.icon24 { width: 24px; height: 24px; }
.icon32 { width: 32px; height: 32px; }

/* Arrows */
.tri-right {
    border: 3.5px solid transparent;
    border-left: 4px solid #000;
    border-right: 0;
}

.tri-down {
    display: inline-block;
    border: 4px solid transparent;
    border-top: 4.5px solid #1e2a3c;
    border-bottom: 0;
}

.tri-up {
    border: 4px solid transparent;
    border-bottom: 4px solid #fff;
    border-top: 0;
}

/* Desktop shortcuts */
.shortcuts {
    position: absolute;
    left: 0;
    top: 0;
    width: 77px;
}

.shortcut {
    position: relative;
    height: 104px;
    padding-top: 7px;
    display: flex;
    flex-direction: column;
    align-items: center;
    text-align: center;
    line-height: 15px;
    letter-spacing: -0.3px;
    color: #fff;
    white-space: nowrap;
    text-shadow: 1px 1px 2px #000, 0 0 3px rgba(0, 0, 0, 0.8);
}

.shortcut-icon {
    width: 48px;
    height: 48px;
    margin-bottom: 3px;
}

.link {
    position: absolute;
    left: 16px;
    top: 40px;
    width: 15px;
    height: 15px;
}

/* Windows */
.window {
    position: absolute;
    display: flex;
    flex-direction: column;
    border: 1px solid #3c5068;
    border-radius: 7px 7px 0 0;
}

.caption-btn {
    width: 31px;
    height: 18px;
    display: flex;
    align-items: center;
    justify-content: center;
    border: 1px solid #8493a6;
    border-radius: 2px;
    background-color: rgba(235, 242, 250, 0.3);
    box-shadow: inset 0 0 0 1px rgba(255, 255, 255, 0.45);
}

.caption-btn svg {
    width: 12px;
    height: 12px;
}

.explorer {
    left: 122px;
    top: 75px;
    width: 799px;
    height: 599px;
    padding: 0 6px 7px 7px;
    background: linear-gradient(#c3d0dc, #d8e3ef 60px, #dbe5f1);
    box-shadow: inset 0 0 0 1px rgba(255, 255, 255, 0.6), 0 0 6px rgba(0, 0, 0, 0.35);
}

.caption {
    height: 28px;
    padding: 8px 2px 0;
    display: flex;
    justify-content: flex-end;
    gap: 2px;
}

.navbar {
    height: 35px;
    padding: 5px 1px 0 2px;
    display: flex;
    align-items: flex-start;
}

.navbuttons {
    width: 68px;
    height: 28px;
    margin-top: -3px;
}

.address, .refresh, .searchbox {
    height: 22px;
    border: 1px solid #8493a3;
    border-top-color: #5f6e7d;
    background-color: #f6fafe;
    display: flex;
    align-items: center;
    color: #46505c;
}

.address {
    width: 439px;
    margin-left: 1px;
    padding: 0 5px 0 2px;
    gap: 8px;
}

.address span {
    letter-spacing: -0.15px;
    margin-left: 1px;
}

.address .tri-down {
    margin-left: auto;
}

.refresh {
    width: 26px;
    margin-left: -1px;
    justify-content: center;
}

.searchbox {
    width: 242px;
    margin-left: 6px;
    padding: 0 4px 0 8px;
    justify-content: space-between;
    font-style: italic;
    color: #6b747e;
    letter-spacing: -0.05px;
}

.client {
    flex: 1;
    display: flex;
    flex-direction: column;
    background-color: #fcfdfe;
}

.commands {
    height: 31px;
    padding-left: 18px;
    padding-bottom: 1px;
    display: grid;
    grid-template-columns: 91px 124px 190px 121px 118px 26px 29px 36px 16px;
    align-items: center;
    white-space: nowrap;
    background: linear-gradient(#fbfdff, #e9f1fb 50%, #dce7f5 52%, #e2ecf8);
    border-top: 1px solid #c3ccd8;
    border-bottom: 1px solid #a9b7c9;
    color: #1e395b;
}

.organize .tri-down {
    margin: 0 0 2px 2px;
}

.commands > .tri-down {
    width: 8px;
}

.more {
    font-size: 16px;
    padding-bottom: 3px;
    color: #111;
}

.body {
    flex: 1;
    display: flex;
}

.tree {
    width: 159px;
    padding-top: 9px;
    border-right: 1px solid #e2e9f2;
}

.node {
    height: 21px;
    padding-left: 18px;
    margin: 0 1px;
    display: flex;
    align-items: center;
    gap: 5px;
    border: 1px solid transparent;
}

.node.sub {
    padding-left: 28px;
}

.node.gap {
    margin-top: 21px;
}

.node.selected {
    border-color: #d9d9d9;
    border-radius: 2px;
    background: linear-gradient(#f8f8f8, #e6e6e6);
}

.files {
    flex: 1;
    padding: 9px 0 0 9px;
}

.group {
    height: 20px;
    display: flex;
    align-items: center;
    font-size: 14.5px;
    color: #2d3a83;
    white-space: nowrap;
}

.group::after {
    content: "";
    flex: 1;
    height: 1px;
    margin-left: 7px;
    background-color: #e4e8ee;
}

.g1 { letter-spacing: -0.1px; }
.g2 { letter-spacing: 0; }

.expander {
    margin: 0 7px 1px 0;
    border-left: 6px solid transparent;
    border-bottom: 6px solid #2b2b2b;
}

.drive {
    display: flex;
    align-items: center;
    gap: 5px;
    height: 63px;
    padding-left: 9px;
    letter-spacing: -0.25px;
}

.disk {
    align-items: flex-start;
    padding-top: 7px;
}

.driveicon {
    width: 48px;
    height: 32px;
    margin-top: 13px;
}

.driveicon.cd {
    height: 44px;
    margin-top: 1px;
}

.driveicon.cd + .driveinfo {
    margin-bottom: 2px;
}

.meter {
    width: 189px;
    height: 13px;
    margin: 1px 0 1px -1px;
    border: 1px solid #a3a8ad;
    background-color: #f8f9fa;
}

.meter-fill {
    height: 100%;
    background: linear-gradient(#5cc9dc, #37adc6 45%, #128097 52%, #2397b2);
}

.free {
    margin-left: -1px;
    letter-spacing: -0.4px;
    color: #6d6d6d;
}

.details {
    height: 53px;
    padding: 3px 0 0 18px;
    display: flex;
    border-top: 1px solid #cfd7e3;
    background: linear-gradient(#eef3fb, #f3f6fc);
}

.detailicon {
    width: 44px;
    height: 44px;
}

.machine {
    width: 33px;
    margin: 4px 0 0 15px;
    font-size: 13px;
    letter-spacing: -0.2px;
}

.facts {
    margin: 3px 0 0;
    display: grid;
    grid-template-columns: 54px 132px 48px 100px;
    grid-auto-rows: 18px;
    column-gap: 5px;
    line-height: 18px;
    white-space: nowrap;
}

.facts dt {
    text-align: right;
    color: #5a6779;
    letter-spacing: -0.25px;
}

.facts dd {
    margin: 0;
    color: #1e2f4a;
    letter-spacing: -0.2px;
}

.facts .ram {
    letter-spacing: -0.5px;
}

/* BeeBEEP */
.beebeep {
    left: 688px;
    top: 171px;
    width: 336px;
    height: 556px;
    padding: 0 7px 6px;
    border-color: #10202f;
    background: linear-gradient(#9bb6d2, #b8d0e9 28px, #c4dbf0 110px, #d9e6f3 118px, #b9d5ec);
    box-shadow: inset 0 0 0 1px rgba(255, 255, 255, 0.7), 0 0 7px rgba(0, 0, 0, 0.55);
}

.titlebar {
    height: 28px;
    padding: 8px 1px 0 2px;
    display: flex;
    gap: 2px;
}

.title {
    flex: 1;
    margin-left: 2px;
}

.dim {
    opacity: 0.75;
}

.red {
    border-color: #6b1f22;
    background: linear-gradient(#e9a698, #d16357 48%, #b93329 52%, #d7604c);
}

.beeclient {
    flex: 1;
    width: 320px;
    display: flex;
    flex-direction: column;
    background-color: #f0f0f0;
}

.menubar {
    height: 20px;
    padding: 0 3px 0 10px;
    display: flex;
    align-items: center;
    gap: 14px;
    letter-spacing: -0.3px;
    background: linear-gradient(#fafafa, #efefef);
}

.menubar b {
    margin-left: auto;
    margin-top: -4px;
}

.menuflag {
    width: 13px;
    height: 12px;
    margin: -5px 0 0 -11px;
}

.toolbar {
    height: 38px;
    display: grid;
    grid-template-columns: 17px 25px 17px 30px 12px 27px 12px 30px 33px 32px 10px 31px 34px;
    align-items: center;
    justify-items: center;
    background: linear-gradient(#fdfdfd, #ececec);
    border-bottom: 1px solid #cfcfcf;
}

.grip {
    width: 6px;
    height: 17px;
    background-image: radial-gradient(circle, #bdbdbd 0.8px, transparent 1px);
    background-size: 3px 3px;
}

.sep {
    width: 1px;
    height: 18px;
    background-color: #d4d4d4;
}

.avatar {
    width: 28px;
    height: 28px;
    display: flex;
    align-items: center;
    justify-content: center;
    border: 2px solid #26d63a;
    color: #fff;
    font-weight: 700;
    font-size: 13px;
}

.avatar.small {
    width: 24px;
    height: 24px;
    font-size: 11px;
    background-color: #000;
}

.yellow { background-color: #fbbc05; }
.purple { background-color: #a800ee; }

.userlist {
    position: relative;
    height: 383px;
    margin: 1px 2px 0 1px;
    padding: 3px 4px;
    border: 1px solid #a0a7b0;
    background-color: #fff;
}

.user {
    height: 30px;
    display: flex;
    align-items: center;
    gap: 6px;
}

.people {
    position: absolute;
    right: 141px;
    bottom: 1px;
    width: 32px;
    height: 28px;
}

.searchrow {
    height: 29px;
    padding: 0 10px 0 8px;
    display: flex;
    align-items: center;
    gap: 8px;
    background-color: #fbfbfb;
    border-bottom: 1px solid #bcbcbc;
}

.userinput {
    width: 256px;
    height: 24px;
    padding-left: 2px;
    line-height: 23px;
    border: 1px solid #4c93d0;
    border-radius: 2px;
    background-color: #fff;
    color: #777;
}

.userinput::before {
    content: "";
    display: inline-block;
    height: 14px;
    margin-right: -1px;
    border-left: 1px solid #000;
    vertical-align: middle;
}

.tabs {
    display: flex;
    height: 25px;
    padding-left: 1px;
}

.tab {
    width: 43px;
    height: 23px;
    display: flex;
    align-items: center;
    justify-content: center;
    gap: 4px;
    padding-right: 3px;
    border: 1px solid #c2c2c2;
    border-top: 0;
    border-radius: 0 0 3px 3px;
    background-color: #ededed;
}

.tab:first-child {
    width: 49px;
    padding-top: 2px;
}

.tab.active {
    width: 50px;
    height: 25px;
    background-color: #fff;
}

.tab:nth-child(3) {
    width: 51px;
}

.statusbar {
    flex: 1;
    display: flex;
    align-items: flex-end;
    justify-content: flex-end;
}

.sizegrip {
    width: 13px;
    height: 13px;
    background-image: radial-gradient(circle, #bababa 0.9px, transparent 1.1px);
    background-size: 4px 4px;
    clip-path: polygon(100% 0, 100% 100%, 0 100%);
}

.tooltip {
    position: absolute;
    left: 68px;
    top: 498px;
    width: 90px;
    height: 21px;
    line-height: 20px;
    letter-spacing: -0.3px;
    text-align: center;
    white-space: nowrap;
    border: 1px solid #000;
    background-color: #ffffe1;
    box-shadow: 2px 2px 2px rgba(0, 0, 0, 0.45);
}

.cursor {
    position: absolute;
    left: 64px;
    top: 475px;
    width: 9px;
    height: 17px;
}

/* Taskbar */
.taskbar {
    position: absolute;
    left: 0;
    bottom: 0;
    width: 1024px;
    height: 40px;
    display: flex;
    border-top: 1px solid #1d4668;
    background: linear-gradient(90deg, #8b9bb6 0, #7f8ead 55px, #a3b6d2 90px, #a9bdda 300px, #a6c0de 700px, #9db5d3 810px, #7287a5 850px, #7186a4);
    box-shadow: inset 0 1px 0 rgba(255, 255, 255, 0.4);
}

.start {
    width: 58px;
}

.orb {
    width: 40px;
    height: 40px;
    margin: -1px 0 0 7px;
}

.task {
    width: 62px;
    display: flex;
    align-items: center;
    justify-content: center;
}

.taskbtn {
    width: 60px;
    height: 39px;
    display: flex;
    align-items: center;
    justify-content: center;
    border: 1px solid #44566d;
    border-radius: 3px;
    background: linear-gradient(135deg, #d5dfeb, #bccbdf);
    box-shadow: inset 0 0 0 1px rgba(255, 255, 255, 0.7);
}

.current {
    width: 55px;
    margin-right: 5px;
    background: linear-gradient(#fff, #e9eef5);
    box-shadow: inset 0 0 0 1px #fff, 4px 0 0 -1px #c7d4e4, 5px 0 0 -1px #44566d;
}

.wmp {
    width: 28px;
    height: 28px;
}

.tray {
    margin-left: auto;
    display: flex;
    align-items: center;
    gap: 9px;
}

.tray .tri-up {
    margin-right: 2px;
}

.clock {
    width: 79px;
    padding: 3px 0 0 5px;
    text-align: center;
    line-height: 17px;
    letter-spacing: -0.45px;
    color: #fff;
}

.peek {
    width: 14px;
    border: 1px solid #44556c;
    background: linear-gradient(135deg, #97a7bd, #52657f);
}
```
